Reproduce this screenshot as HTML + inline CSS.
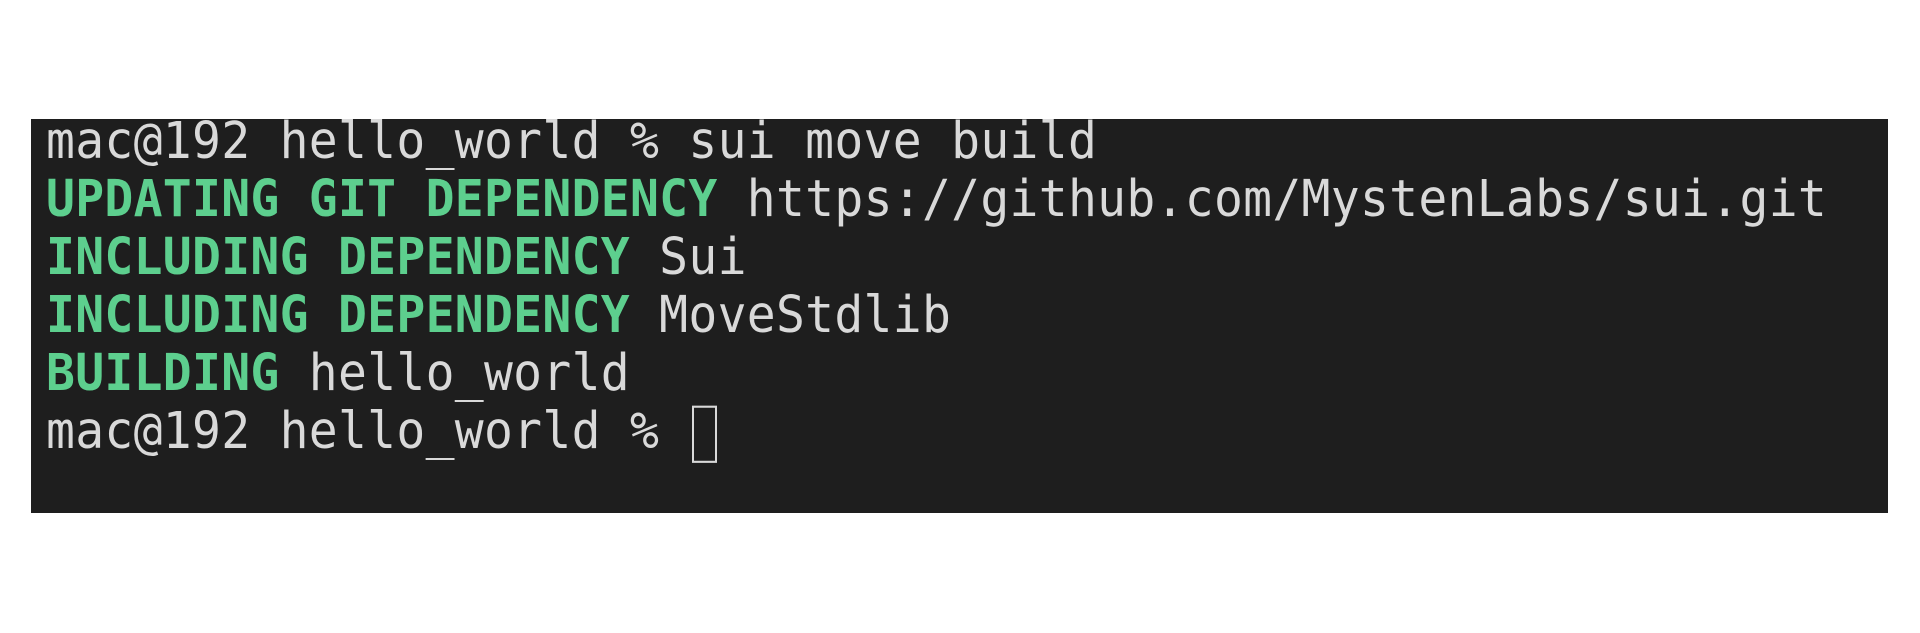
<!DOCTYPE html>
<html><head><meta charset="utf-8"><style>
html,body{margin:0;padding:0;background:#fff;width:1920px;height:633px;overflow:hidden}
.term{position:absolute;left:31px;top:119px;width:1857px;height:394px;background:#1e1e1e}
.l{position:absolute;left:46px;font-family:"DejaVu Sans Mono","Liberation Mono",monospace;font-size:48px;line-height:58px;color:#d9d9d9;white-space:pre;letter-spacing:0.3px;transform:scaleY(1.06);transform-origin:0 75%}
.g{color:#5dcf8e;font-weight:bold}
.cur{display:inline-block;margin-left:4px;width:25px;height:54px;border:2px solid #d9d9d9;vertical-align:-14px;box-sizing:border-box}
</style></head><body>
<div class="term"></div>
<div class="l" style="top:113px">mac@192 hello_world % sui move build</div>
<div class="l" style="top:171px"><span class="g">UPDATING GIT DEPENDENCY</span> https://github.com/MystenLabs/sui.git</div>
<div class="l" style="top:229px"><span class="g">INCLUDING DEPENDENCY</span> Sui</div>
<div class="l" style="top:287px"><span class="g">INCLUDING DEPENDENCY</span> MoveStdlib</div>
<div class="l" style="top:345px"><span class="g">BUILDING</span> hello_world</div>
<div class="l" style="top:403px">mac@192 hello_world % <span class="cur"></span></div>
</body></html>
